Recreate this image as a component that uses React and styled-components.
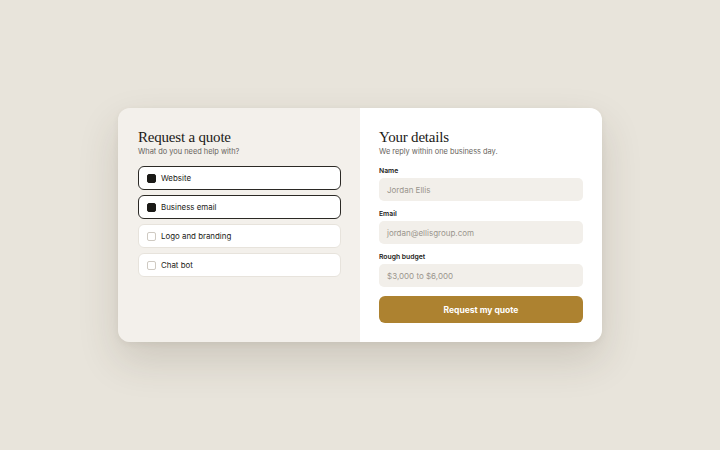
import React from 'react';
import styled, { createGlobalStyle } from 'styled-components';

const Global = createGlobalStyle`
  html, body { margin: 0; padding: 0; }
  body {
    background: #e8e4db;
    font-family: Inter, "Liberation Sans", sans-serif;
    -webkit-font-smoothing: antialiased;
  }
`;

const Page = styled.div`
  width: 720px;
  height: 450px;
  display: flex;
  align-items: center;
  justify-content: center;
`;

const Card = styled.div`
  width: 484px;
  height: 234px;
  display: grid;
  grid-template-columns: 242px 242px;
  border-radius: 12px;
  overflow: hidden;
  box-shadow: 0 18px 40px rgba(60, 50, 30, 0.16), 0 2px 6px rgba(60, 50, 30, 0.06);
`;

const Panel = styled.div`
  background: ${p => (p.tinted ? '#f3f0eb' : '#ffffff')};
  padding: ${p => (p.tinted ? '21px 19px 0 20px' : '21px 19px 0 19px')};
  display: flex;
  flex-direction: column;
`;

const Title = styled.h2`
  margin: 0;
  font-family: "Liberation Serif", "DejaVu Serif", serif;
  font-weight: 400;
  font-size: 15px;
  line-height: 17px;
  color: #1b1a17;
  letter-spacing: -0.2px;
`;

const Sub = styled.p`
  margin: 1px 0 0;
  font-size: 7.4px;
  line-height: 10px;
  color: #67635c;
`;

const Options = styled.div`
  margin-top: 9px;
  display: flex;
  flex-direction: column;
  gap: 5px;
`;

const Option = styled.div`
  height: 24px;
  box-sizing: border-box;
  display: flex;
  align-items: center;
  gap: 5px;
  padding: 0 8px;
  background: #ffffff;
  border: 1px solid ${p => (p.checked ? '#2b2925' : '#e7e3dc')};
  border-radius: 6px;
  font-size: 7.9px;
  color: #1b1a17;
`;

const Box = styled.span`
  width: 9px;
  height: 9px;
  box-sizing: border-box;
  border-radius: 2px;
  background: ${p => (p.checked ? '#1b1a17' : '#ffffff')};
  border: 1px solid ${p => (p.checked ? '#1b1a17' : '#cfcac2')};
`;

const Label = styled.label`
  display: block;
  margin-top: ${p => (p.first ? '9px' : '8px')};
  font-size: 6.8px;
  line-height: 9px;
  font-weight: 600;
  color: #1b1a17;
`;

const Field = styled.div`
  margin-top: 3px;
  height: 23px;
  border-radius: 5px;
  background: #f2efea;
  display: flex;
  align-items: center;
  padding: 0 8px;
  font-size: 8px;
  color: #9a958d;
`;

const Submit = styled.button`
  margin-top: 9px;
  height: 27px;
  border: none;
  border-radius: 6px;
  background: #ad8230;
  color: #ffffff;
  font-family: Inter, "Liberation Sans", sans-serif;
  font-size: 8.5px;
  font-weight: 700;
`;

const services = [
  { name: 'Website', checked: true },
  { name: 'Business email', checked: true },
  { name: 'Logo and branding', checked: false },
  { name: 'Chat bot', checked: false },
];

export default function App() {
  return (
    <Page>
      <Global />
      <Card>
        <Panel tinted>
          <Title>Request a quote</Title>
          <Sub>What do you need help with?</Sub>
          <Options>
            {services.map(s => (
              <Option key={s.name} checked={s.checked}>
                <Box checked={s.checked} />
                {s.name}
              </Option>
            ))}
          </Options>
        </Panel>
        <Panel>
          <Title>Your details</Title>
          <Sub>We reply within one business day.</Sub>
          <Label first>Name</Label>
          <Field>Jordan Ellis</Field>
          <Label>Email</Label>
          <Field>jordan@ellisgroup.com</Field>
          <Label>Rough budget</Label>
          <Field>$3,000 to $6,000</Field>
          <Submit>Request my quote</Submit>
        </Panel>
      </Card>
    </Page>
  );
}
